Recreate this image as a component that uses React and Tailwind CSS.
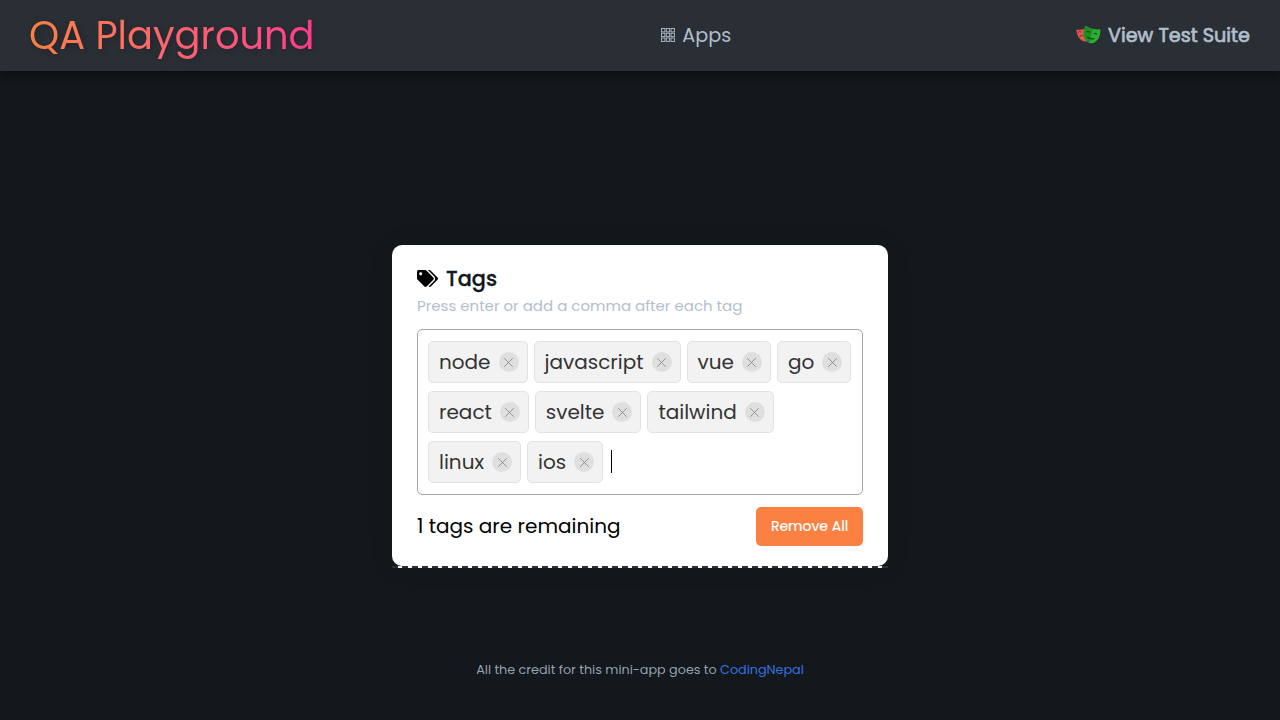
import { FaTags } from "react-icons/fa";

const tags = ["node", "javascript", "vue", "go", "react", "svelte", "tailwind", "linux", "ios"];

function Masks() {
  return (
    <svg className="h-[19px] w-[25px]" viewBox="0 0 26 19.500">
      <path d="M0.4 4.6c3 .6 6 .3 8.8-.8l2.6 12.4c-1 .8-2.200 1.100-3.300.8C3.800 16 .7 10.500.4 4.600z" fill="#e2574c" />
      <path d="M2.300 7.600c.8-1 2-1.100 2.900-.2M3.700 12.400c1-1.500 2.600-2 4-1.400" fill="none" stroke="#5c2f2e" strokeWidth="1" />
      <path d="M10.200.6c4.300 3 9.500 4.300 15.200 3.800.2 6.500-2.300 13.300-8.300 14.400-6 .6-9.500-5-9.200-10.600.1-3 .9-5.500 2.300-7.600z" fill="#2ead33" />
      <path d="M10.200.6c2.300 1.600 4.700 2.700 7.300 3.300L14 18c-4.300-1.500-6.400-5.600-6.100-9.800.1-3 .9-5.500 2.300-7.600z" fill="#1d8d22" />
      <path d="M11.200 7c1.100-.7 2.300-.4 2.900.7M18.500 9c1.100-.8 2.400-.5 3 .6" fill="none" stroke="#12481a" strokeWidth="1.200" />
      <path d="M11 11.500c2.800 1.700 5.800 2.400 9 2.100-1 1.300-2.900 1.700-5 1.200-2.200-.5-3.700-1.600-4-3.300z" fill="#12481a" />
    </svg>
  );
}

function Grid() {
  return (
    <svg className="mb-0.5 size-3.5" viewBox="0 0 14 14" fill="none" stroke="currentColor" strokeWidth="0.9">
      {[0, 1, 2].flatMap((r) => [0, 1, 2].map((c) => <rect key={r * 3 + c} x={0.5 + c * 4.75} y={0.5 + r * 4.75} width="3.400" height="3.400" />))}
    </svg>
  );
}

function Tag({ name }) {
  return (
    <li className="mx-[3px] my-1 flex h-[42px] items-center rounded-[5px] border border-[#e3e1e1] bg-[#f2f2f2] pr-2 pl-2.5 text-[20px] text-[#333]">
      {name}
      <button className="ml-2 flex size-5 items-center justify-center rounded-full bg-[#dfdfdf]" aria-label={"Remove " + name}>
        <svg className="size-[9px]" viewBox="0 0 9 9" fill="none" stroke="#808080" strokeWidth="0.8" strokeLinecap="round">
          <path d="M.5.5l8 8M8.500.5l-8 8" />
        </svg>
      </button>
    </li>
  );
}

export default function App() {
  return (
    <div className="flex h-screen flex-col overflow-hidden bg-[#12181b] font-['Poppins','Inter',sans-serif]">
      <header className="flex h-[71px] shrink-0 items-center justify-between bg-[#2a2e35] pr-[30px] pl-[29px] text-[19.2px] text-[#b2becd] shadow-[0_3px_10px_rgba(0,0,0,0.45)]">
        <h1 className="w-fit bg-linear-to-r from-[#fa8142] to-[#ff3a8c] bg-clip-text text-[38.4px] leading-[59px] font-normal text-transparent drop-shadow-[2px_2px_3px_rgba(0,0,0,0.2)]">QA Playground</h1>
        <a className="flex items-center gap-[7px] pt-0.5 pl-0.5">
          <Grid />
          Apps
        </a>
        <a className="flex items-center gap-[7px] pt-0.5 [-webkit-text-stroke:0.7px_#b2becd]">
          <span className="pb-[3px]"><Masks /></span>
          View Test Suite
        </a>
      </header>
      <main className="mx-auto mt-[174px] w-[496px]">
        <section className="h-[321px] rounded-[10px] bg-white px-[25px] pt-[18px] shadow-[0_0_30px_rgba(0,0,0,0.06)]">
          <div className="flex h-8 items-center gap-2">
            <FaTags className="mb-px size-[21px] text-black" />
            <h2 className="text-[20.8px] font-medium text-[#12181b] [-webkit-text-stroke:0.3px_#12181b]">Tags</h2>
          </div>
          <p className="-mt-px text-[15px] leading-[23px] text-[#b2becd]">Press enter or add a comma after each tag</p>
          <ul className="mt-3 flex h-[166px] flex-wrap content-start rounded-[5px] border border-[#a6a6a6] p-[7px]">
            {tags.map((name) => (
              <Tag key={name} name={name} />
            ))}
            <li className="mt-[13px] ml-[5px] h-[23px] w-px bg-black" />
          </ul>
          <div className="mt-3 flex h-[39px] items-center justify-between">
            <p className="pb-0.5 text-[20px] text-black">1 tags are remaining</p>
            <button className="h-[39px] w-[107px] rounded-[5px] bg-[#fa8142] text-[14px] text-white [-webkit-text-stroke:0.2px_#fff]">Remove All</button>
          </div>
        </section>
        <div className="border-b-2 border-dashed border-[#2a2e35] bg-[#f0f8ff]" />
      </main>
      <footer className="mt-[92px] text-center text-[12.75px] leading-5 text-[#b2becd]/85">
        All the credit for this mini-app goes to <a className="text-[#3b6fe0]">CodingNepal</a>
      </footer>
    </div>
  );
}
